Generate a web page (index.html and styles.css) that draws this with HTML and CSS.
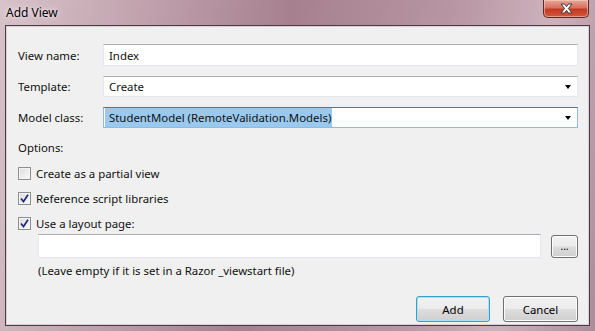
FILE: index.html
```html
<!DOCTYPE html>
<html lang="en">
<head>
    <meta charset="UTF-8">
    <meta name="viewport" content="width=device-width, initial-scale=1.0">
    <title>Add View</title>
    <link rel="stylesheet" href="styles.css">
</head>
<body>
    <div class="window">
        <div class="titlebar">
            <span class="title">Add View</span>
            <button class="close-btn" type="button">
                <svg width="17" height="11" viewBox="0 0 17 11">
                    <path d="M3 1 L6.5 1 L8.5 3.6 L10.5 1 L14 1 L10.4 5.5 L14 10 L10.5 10 L8.5 7.4 L6.5 10 L3 10 L6.6 5.5 Z" fill="#fff" stroke="#3a3a3a" stroke-width="1"/>
                </svg>
            </button>
        </div>
        <div class="client">
            <div class="row">
                <label class="lbl" for="viewName">View name:</label>
                <div class="field"><span>Index</span></div>
            </div>
            <div class="row">
                <label class="lbl">Template:</label>
                <div class="field combo"><span>Create</span><i class="arrow"></i></div>
            </div>
            <div class="row">
                <label class="lbl">Model class:</label>
                <div class="field combo focused"><span class="selected">StudentModel (RemoteValidation.Models)</span><i class="arrow"></i></div>
            </div>

            <div class="options">Options:</div>

            <div class="check-row">
                <span class="checkbox"></span>
                <span>Create as a partial view</span>
            </div>
            <div class="check-row">
                <span class="checkbox checked">
                    <svg width="9" height="9" viewBox="0 0 9 9"><path d="M1 4.5 L3.5 7.5 L8 0.8" fill="none" stroke="#1f2a7a" stroke-width="1.7"/></svg>
                </span>
                <span>Reference script libraries</span>
            </div>
            <div class="check-row">
                <span class="checkbox checked">
                    <svg width="9" height="9" viewBox="0 0 9 9"><path d="M1 4.5 L3.5 7.5 L8 0.8" fill="none" stroke="#1f2a7a" stroke-width="1.7"/></svg>
                </span>
                <span>Use a layout page:</span>
            </div>

            <div class="layout-row">
                <div class="field layout-field"></div>
                <button class="btn browse" type="button">...</button>
            </div>
            <div class="hint">(Leave empty if it is set in a Razor _viewstart file)</div>

            <div class="actions">
                <button class="btn default" type="button">Add</button>
                <button class="btn" type="button">Cancel</button>
            </div>
        </div>
    </div>
</body>
</html>
```

FILE: styles.css
```css
body {
    margin: 0;
    font-family: "Noto Sans", "Open Sans", sans-serif;
    font-size: 11.4px;
    color: #111;
}
.window {
    width: 595px;
    height: 331px;
    box-sizing: border-box;
    padding: 0 5px 5px 5px;
    display: flex;
    flex-direction: column;
    background: linear-gradient(100deg, #d8c3ca 0%, #c3a5b0 20%, #a6808f 45%, #b896a3 70%, #cdb2bc 85%, #ad8c99 100%);
}
.titlebar {
    height: 25px;
    display: flex;
    align-items: flex-start;
    justify-content: space-between;
    flex-shrink: 0;
}
.title {
    margin: 4px 0 0 1px;
    font-size: 12px;
    color: #000;
    text-shadow: 0 0 6px #f4eaee, 0 0 3px #f4eaee;
}
.close-btn {
    width: 46px;
    height: 18px;
    margin-right: 1px;
    border: 1px solid #5a2a26;
    border-top: none;
    border-radius: 0 0 5px 5px;
    padding: 0;
    display: flex;
    align-items: center;
    justify-content: center;
    background: linear-gradient(#e7a89b 0%, #d8725e 45%, #c23a22 55%, #d4573b 100%);
    box-shadow: inset 0 0 0 1px rgba(255, 220, 210, 0.5);
}
.client {
    flex: 1;
    background-color: #f0f0f0;
    border: 1px solid #4a3b44;
    box-shadow: inset 0 0 0 1px #d8d0d4;
    padding: 18px 11px 0 12px;
    display: flex;
    flex-direction: column;
}
.row {
    display: flex;
    align-items: center;
    height: 22px;
    margin-bottom: 9px;
}
.lbl {
    width: 85px;
    flex-shrink: 0;
}
.field {
    flex: 1;
    height: 22px;
    box-sizing: border-box;
    background: #fff;
    border: 1px solid #e2e8ee;
    border-top-color: #abadb3;
    display: flex;
    align-items: center;
    padding-left: 5px;
    position: relative;
}
.combo {
    height: 21px;
}
.focused {
    border-color: #8fbae3;
    border-top-color: #3d7bad;
    padding-left: 1px;
}
.selected {
    background: #99c9ef;
    padding: 0 1px 0 4px;
    line-height: 19px;
}
.arrow {
    position: absolute;
    right: 6px;
    top: 8px;
    width: 0;
    height: 0;
    border-left: 3.5px solid transparent;
    border-right: 3.5px solid transparent;
    border-top: 4px solid #000;
}
.options {
    margin-top: 2px;
    height: 18px;
    line-height: 18px;
}
.check-row {
    display: flex;
    align-items: center;
    gap: 5px;
    margin-top: 8px;
    height: 16px;
}
.check-row + .check-row {
    margin-top: 9px;
}
.checkbox {
    width: 13px;
    height: 13px;
    box-sizing: border-box;
    border: 1px solid #8e8f8f;
    background: linear-gradient(135deg, #dcdcdc, #fbfbfb);
    box-shadow: inset 0 0 0 1px #f4f4f4;
    display: flex;
    align-items: center;
    justify-content: center;
}
.layout-row {
    display: flex;
    align-items: center;
    margin: 3px 0 0 20px;
    height: 24px;
}
.layout-field {
    height: 24px;
    flex: 1;
}
.btn {
    font-family: inherit;
    font-size: 11.4px;
    color: #000;
    border: 1px solid #707070;
    border-radius: 3px;
    background: linear-gradient(#f2f2f2 0%, #ebebeb 48%, #dddddd 52%, #cfcfcf 100%);
    box-shadow: inset 0 0 0 1px #fcfcfc;
    padding: 0;
    cursor: pointer;
}
.browse {
    width: 27px;
    height: 23px;
    margin-left: 10px;
    font-size: 10px;
    line-height: 1;
}
.hint {
    margin: 4px 0 0 20px;
    height: 18px;
    line-height: 18px;
}
.actions {
    display: flex;
    justify-content: flex-end;
    gap: 13px;
    margin-top: 16px;
}
.actions .btn {
    width: 75px;
    height: 26px;
}
.btn.default {
    width: 74px;
    border-color: #3c9ec8;
    box-shadow: inset 0 0 0 1px #a9e2f7;
}
```
